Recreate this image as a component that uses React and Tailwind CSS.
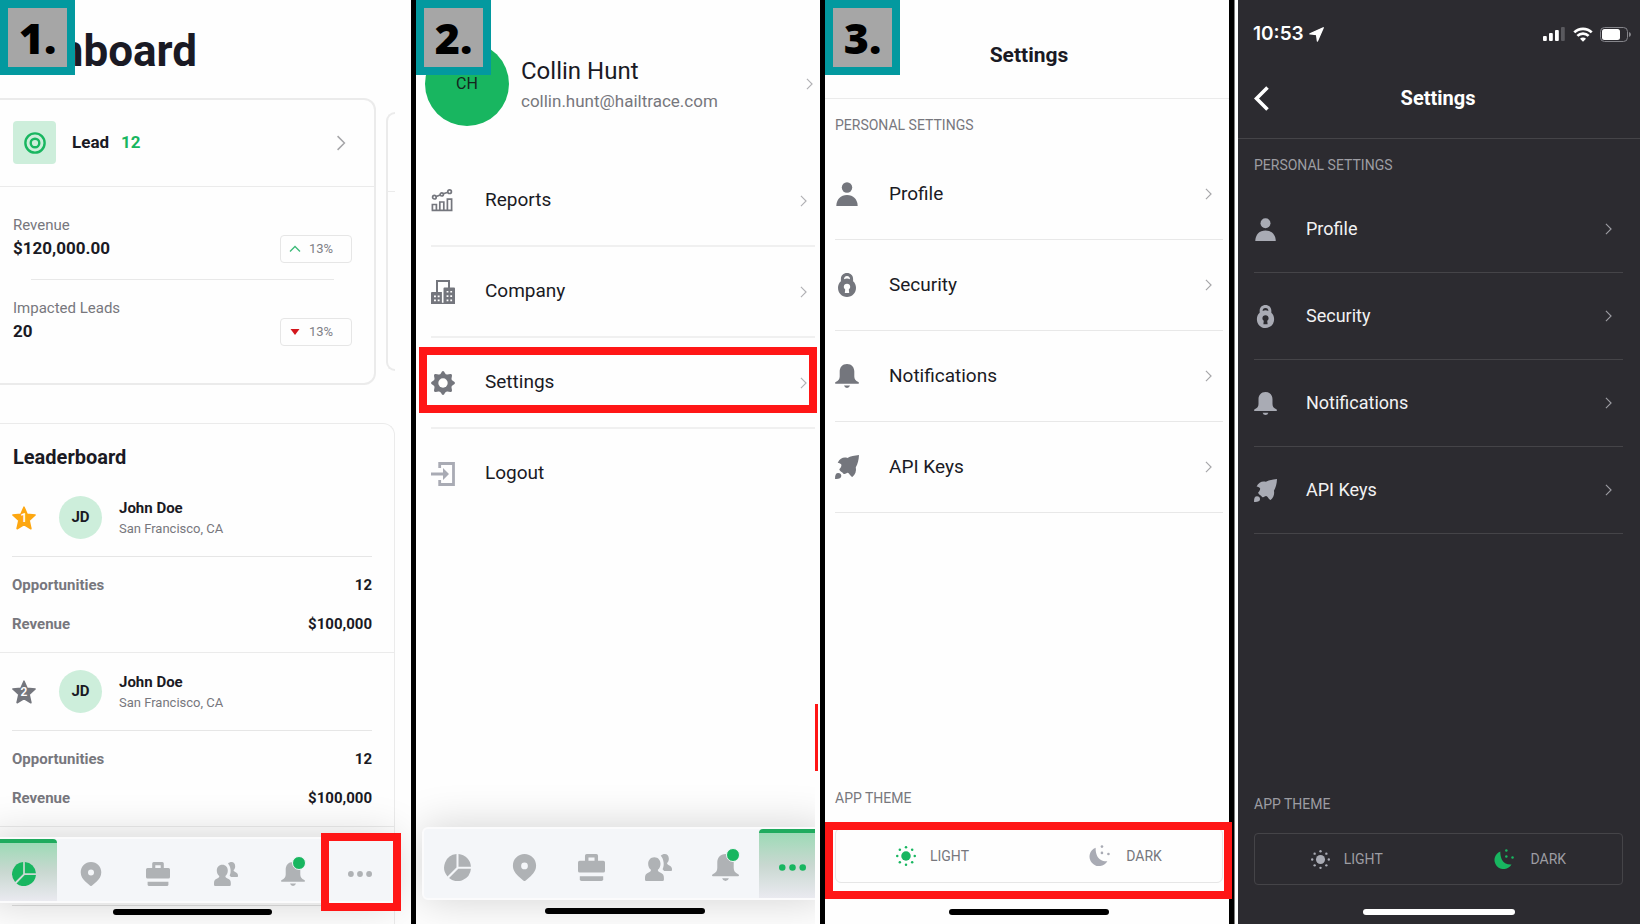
import React from "react";

/* ---------- icons ---------- */

function Icon({ className, children, ...rest }) {
  return (
    <svg viewBox="0 0 24 24" fill="currentColor" aria-hidden="true" className={`shrink-0 ${className}`} {...rest}>
      {children}
    </svg>
  );
}

const PieIcon = ({ className }) => (
  <Icon className={className}>
    <path d="M12.9.05A12 12 0 0 1 23.95 11.3H12.9Z" />
    <path d="M11.1.05V11.9L3.1 19.9A12 12 0 0 1 11.1.05Z" />
    <path d="M23.95 13.1A12 12 0 0 1 4.5 21.4L12.7 13.1Z" />
  </Icon>
);

const PinIcon = ({ className }) => (
  <Icon className={className}>
    <path
      fillRule="evenodd"
      d="M12 0C6.2 0 1.7 4.6 1.7 10.3c0 4.2 2 6.6 4.6 9.2l4.6 4.1c.7.6 1.5.6 2.2 0l4.6-4.1c2.6-2.6 4.6-5 4.6-9.2C22.3 4.6 17.8 0 12 0Zm0 7.6a3 3 0 1 1 0 6 3 3 0 0 1 0-6Z"
    />
  </Icon>
);

const BriefcaseIcon = ({ className }) => (
  <Icon className={className}>
    <path
      fillRule="evenodd"
      d="M6.2 6V1.5Q6.2 0 7.7 0h8.6q1.5 0 1.5 1.5V6H22.5q1.500 0 1.500 1.500V15q0 1.500-1.500 1.500h-21Q0 16.500 0 15V7.500Q0 6 1.500 6ZM9.300 3.200V6h5.400V3.200Z"
    />
    <path d="M1.600 19.700h20.800V22.500q0 1.500-1.500 1.500H3.100q-1.500 0-1.500-1.500Z" />
  </Icon>
);

const UsersIcon = ({ className }) => (
  <Icon className={className}>
    <path d="M8.300 2.800c3.400 0 5.500 2.600 5.500 5.800 0 2.300-.900 4.300-2.400 5.500 0 1.500.800 1.800 2.100 2.400 2.500 1.100 3.300 2.300 3.300 4.500v1.800q0 1.200-1.200 1.200H1.200Q0 24 0 22.800V21c0-2.200.800-3.400 3.200-4.500 1.300-.600 2.100-.900 2.100-2.400C3.700 12.900 2.800 10.900 2.800 8.600c0-3.200 2.100-5.800 5.500-5.800Z" />
    <path d="M14 1.500C15 .500 16.200 0 17.500 0c2.300 0 3.700 1.800 3.700 4.200 0 1.700-.600 3-1.600 3.900 0 1.200.700 1.400 1.600 1.800 2 .900 2.800 1.900 2.800 3.500v.800q0 .800-.800.800h-6.300c-.300-.600-.800-1-1.300-1.500 1-2 1.200-4 .900-6.200C16.200 4.800 15.300 3 14 1.500Z" />
  </Icon>
);

const BellIcon = ({ className }) => (
  <Icon className={className}>
    <path d="M12 0C7.300 0 4.700 3.400 4.700 7.600V12.500c0 2.700-1.300 4.300-4 5.400Q0 18.300 0 19.100q0 .700.800.700h22.400q.800 0 .800-.700 0-.800-.700-1.200c-2.700-1.100-4-2.700-4-5.400V7.600C19.300 3.400 16.700 0 12 0Z" />
    <path d="M9 21.600h6q-.700 2.400-3 2.400t-3-2.400Z" />
  </Icon>
);

const DotsIcon = ({ className }) => (
  <Icon className={className}>
    <circle cx="2.9" cy="12" r="2.9" />
    <circle cx="12" cy="12" r="2.9" />
    <circle cx="21.1" cy="12" r="2.9" />
  </Icon>
);

const ReportsIcon = ({ className }) => (
  <Icon className={className} fill="none" stroke="currentColor" strokeWidth="1.7">
    <path d="M1.400 21.300V15.500h4v5.800M8.800 21.300V13h4v8.300M16.400 21.300V10.200h4.200v11.100M.600 21.300h20.900" />
    <circle cx="3.4" cy="8.2" r="1.8" />
    <circle cx="10.8" cy="5.4" r="1.6" />
    <circle cx="18.6" cy="2.7" r="1.8" />
    <path d="M5.200 7.500l4-1.500M12.400 4.800l4.400-1.500" />
  </Icon>
);

const CompanyIcon = ({ className }) => (
  <Icon className={className}>
    <path fill="none" stroke="currentColor" strokeWidth="2" d="M6 12V1h12v7.500" />
    <path
      fillRule="evenodd"
      d="M1 12h9.900v10.700h1.600V8.500q0-1 1-1H23q1 0 1 1V24H0V13q0-1 1-1Zm2 3.600v1.700h1.900v-1.700Zm3.700 0v1.700h1.900v-1.700Zm-3.700 4v1.700h1.900v-1.700Zm3.700 0v1.700h1.900v-1.700Zm8.900-8.600v1.600h1.800V11Zm3.700 0v1.600h1.800V11Zm-3.700 4.300v1.600h1.800v-1.600Zm3.700 0v1.600h1.800v-1.600Zm-3.700 4.300v1.600h1.800v-1.600Zm3.700 0v1.600h1.800v-1.600Z"
    />
  </Icon>
);

const GEAR_QUADRANT =
  "M12 12V0Q13.100 0 13.900 1.900Q14.700 3.800 16.500 3.500L19.300 3Q21.300 2.700 21 4.700L20.500 7.500Q20.200 9.300 22.100 10.100Q24 10.900 24 12Z";

const GearIcon = ({ className }) => (
  <Icon className={className}>
    <mask id="gear-hole">
      <rect width="24" height="24" fill="#fff" />
      <circle cx="12" cy="12" r="4.7" fill="#000" />
    </mask>
    <g mask="url(#gear-hole)">
      <path d={GEAR_QUADRANT} />
      <path d={GEAR_QUADRANT} transform="rotate(90 12 12)" />
      <path d={GEAR_QUADRANT} transform="rotate(180 12 12)" />
      <path d={GEAR_QUADRANT} transform="rotate(270 12 12)" />
      <circle cx="12" cy="12" r="7" />
    </g>
  </Icon>
);

const LogoutIcon = ({ className }) => (
  <Icon className={className}>
    <path fill="none" stroke="currentColor" strokeWidth="2.8" d="M8.700 6V1.500H22.500V22.500H8.700V18" />
    <path d="M0 10.500h12V6L18 12l-6 6V13.500H0Z" />
  </Icon>
);

const PersonIcon = ({ className }) => (
  <Icon className={className}>
    <circle cx="12" cy="5.5" r="5.2" />
    <path d="M1.300 24C1.500 17.200 5.700 13 12 13s10.500 4.200 10.700 11Z" />
  </Icon>
);

const LockIcon = ({ className }) => (
  <Icon className={className}>
    <path
      fillRule="evenodd"
      d="M12 0C8.400 0 5.900 2.500 5.900 6v2.200C4 9.800 3 12.200 3 14.800 3 20 6.800 24 12 24s9-4 9-9.200c0-2.600-1-5-2.900-6.600V6c0-3.500-2.500-6-6.100-6Zm0 3c2 0 3 1.300 3 3.200-1-.500-2-.700-3-.700s-2 .200-3 .700C9 4.300 10 3 12 3Zm0 7.800c1.900 0 3.200 1.300 3.200 3 0 1.100-.500 2-1.400 2.600l.400 3.600H9.800l.400-3.600c-.900-.600-1.400-1.500-1.400-2.600 0-1.700 1.300-3 3.200-3Z"
    />
  </Icon>
);

const RocketIcon = ({ className }) => (
  <Icon className={className}>
    <path d="M24 0C19.500.400 15.500 1.200 12.400 2.900 9 1.800 5 2.800 2.700 7.800c1.700.300 3.200.900 3.700 2C6.600 11.600 5.500 13 4.300 14.200c.300 1.600 1.500 2.400 2.700 3 .900.500 1.200 1.500 1.900 1.800 1.600.500 2.600-1.300 3.700-1.200 1.600.100 2.200 3 4.700 4.200 3-2.500 4.300-6 3.500-9.800C22.700 9 23.800 5 24 0Z" />
    <path d="M.100 24C-.100 20.500.500 17.900 3.200 17.900c1.900 0 3.100 1.300 3.100 2.900C6.300 23.400 3.600 24.100.100 24Z" />
  </Icon>
);

const SunIcon = ({ className }) => (
  <Icon className={className}>
    <circle cx="12" cy="12" r="5.7" />
    <circle cx="12" cy="1.5" r="1.5" />
    <circle cx="12" cy="22.5" r="1.5" />
    <circle cx="1.5" cy="12" r="1.5" />
    <circle cx="22.5" cy="12" r="1.5" />
    <circle cx="4.6" cy="4.6" r="1.5" />
    <circle cx="19.4" cy="4.6" r="1.5" />
    <circle cx="4.6" cy="19.4" r="1.5" />
    <circle cx="19.4" cy="19.4" r="1.5" />
  </Icon>
);

const MoonIcon = ({ className }) => (
  <Icon className={className}>
    <path d="M7.600 3A10.900 10.900 0 1 0 21 18.500C15.500 18.800 11 16.500 9.200 12.200 7.800 8.800 7.500 5.800 7.600 3Z" />
    <circle cx="14.8" cy="1.8" r="1.5" />
    <circle cx="14.8" cy="9" r="1.5" />
    <circle cx="22.2" cy="10.3" r="1.5" />
  </Icon>
);

const TargetIcon = ({ className }) => (
  <Icon className={className} fill="none" stroke="currentColor" strokeWidth="2.6">
    <circle cx="12" cy="12" r="10.5" />
    <circle cx="12" cy="12" r="4.7" />
  </Icon>
);

const StarIcon = ({ className }) => (
  <Icon className={className}>
    <path
      stroke="currentColor"
      strokeWidth="1.6"
      strokeLinejoin="round"
      d="M12 1.200l3.100 7 8 .800-6 5.300 1.800 8.400L12 18.500 5.100 22.700l1.800-8.400-6-5.300 8-.800Z"
    />
  </Icon>
);

function Chevron({ className }) {
  return (
    <svg viewBox="0 0 8 14" fill="none" stroke="currentColor" aria-hidden="true" className={`shrink-0 ${className}`}>
      <path d="M1 1l6 6-6 6" strokeWidth="1.3" />
    </svg>
  );
}

/* ---------- shared parts ---------- */

function StepBadge({ children }) {
  return (
    <div className="absolute left-0 top-0 z-20 flex h-[75px] w-[75px] items-center justify-center border-8 border-[#03999f] bg-[#a6a6a6] font-['Open_Sans',sans-serif] text-[43px] font-extrabold leading-none text-black">
      {children}
    </div>
  );
}

const TABS = [
  { label: "Dashboard", icon: PieIcon },
  { label: "Map", icon: PinIcon },
  { label: "Jobs", icon: BriefcaseIcon },
  { label: "Contacts", icon: UsersIcon },
  { label: "Alerts", icon: BellIcon, dot: true },
  { label: "More", icon: DotsIcon },
];

function TabBar({ active, size, className }) {
  return (
    <nav
      className={`flex rounded-md border-2 border-[#fbfbfc] bg-[#f4f6f9] shadow-[0_0_44px_rgba(0,0,0,0.18)] ${className}`}
    >
      {TABS.map(({ label, icon: TabIcon, dot }) => {
        const on = label === active;
        return (
          <button
            key={label}
            type="button"
            aria-label={label}
            className={`flex flex-1 basis-0 items-center justify-center ${
              on
                ? "rounded-t-sm border-t-4 border-[#1fab5e] bg-linear-to-b from-[#9cdab6] via-[#c9d8d1] to-[#eaeaf0] pt-1 text-[#18b660]"
                : "pt-2 text-[#afb2b5]"
            }`}
          >
            <span className="relative">
              <TabIcon className={size} />
              {dot && (
                <span className="absolute -right-px -top-1.5 h-3.5 w-3.5 rounded-full border border-[#f4f6f9] bg-[#18b660]" />
              )}
            </span>
          </button>
        );
      })}
    </nav>
  );
}

/* ---------- panel 1 ---------- */

function Stat({ label, value, trend }) {
  return (
    <div>
      <div className="text-[15px] leading-5 text-[#77777d]">{label}</div>
      <div className="flex h-7 items-center justify-between">
        <span className="text-[17px] font-bold text-[#1a1a24]">{value}</span>
        <span className="flex h-7 w-[72px] items-center gap-2 rounded border border-[#e6e6e6] pl-2 text-[13px] text-[#808086]">
          {trend === "up" ? (
            <svg viewBox="0 0 12 8" aria-hidden="true" className="h-2 w-3">
              <path d="M1 6.500l5-5 5 5" fill="none" stroke="#3dba78" strokeWidth="1.3" />
            </svg>
          ) : (
            <svg viewBox="0 0 12 8" aria-hidden="true" className="h-2 w-3">
              <path d="M1.500 1h9L6 7Z" fill="#d3161c" />
            </svg>
          )}
          13%
        </span>
      </div>
    </div>
  );
}

function Leader({ rank, color }) {
  return (
    <li className="border-b border-[#ebebeb] pb-[18px] pl-3 pr-[22px] pt-[17px]">
      <div className="flex items-center border-b border-[#e6e6e6] pb-[17px]">
        <span className="relative flex h-6 w-6 items-center justify-center">
          <StarIcon className={`absolute inset-0 h-6 w-6 ${color}`} />
          <span className="relative text-xs font-semibold leading-none text-white">{rank}</span>
        </span>
        <span className="ml-[23px] flex h-[43px] w-[43px] items-center justify-center rounded-full bg-[#cdeedb] text-[15px] font-bold text-[#1a1a24]">
          JD
        </span>
        <div className="ml-[17px]">
          <div className="text-[15px] font-bold leading-[22px] text-[#1a1a24]">John Doe</div>
          <div className="text-[13px] leading-5 text-[#77777d]">San Francisco, CA</div>
        </div>
      </div>
      <dl className="flex flex-col gap-[19px] pt-[18px] text-[15px] font-bold leading-5">
        <div className="flex justify-between">
          <dt className="text-[#77777d]">Opportunities</dt>
          <dd className="text-[#1a1a24]">12</dd>
        </div>
        <div className="flex justify-between">
          <dt className="text-[#77777d]">Revenue</dt>
          <dd className="text-[#1a1a24]">$100,000</dd>
        </div>
      </dl>
    </li>
  );
}

function DashboardPanel() {
  return (
    <section className="relative flex h-screen flex-col overflow-hidden bg-[#fefefe]">
      <StepBadge>1.</StepBadge>
      <div className="flex min-h-0 flex-1 flex-col pr-4">
        <h1 className="-ml-4 h-[98px] shrink-0 pt-[25px] text-[44px] font-bold leading-[52px] text-[#1a1a24]">Dashboard</h1>
        <div className="flex shrink-0 gap-2.5">
          <div className="flex-1 rounded-r-xl border-y-2 border-r-2 border-[#ebebeb]">
            <div className="flex h-[87px] items-center border-b border-[#ebebeb] pb-px pl-[13px] pr-7">
              <span className="flex h-[43px] w-[43px] items-center justify-center rounded bg-[#cdeedb]">
                <TargetIcon className="h-[22px] w-[22px] text-[#18b660]" />
              </span>
              <span className="ml-4 text-[17px] font-bold text-[#1a1a24]">Lead</span>
              <span className="ml-3 flex-1 text-[17px] font-bold text-[#18b660]">12</span>
              <Chevron className="h-4 w-2.5 text-[#a5a5a8]" />
            </div>
            <div className="pb-[37px] pl-[13px] pr-[22px] pt-7">
              <Stat label="Revenue" value="$120,000.00" trend="up" />
              <hr className="mx-[18px] mb-[18px] mt-4 border-[#e8e8e8]" />
              <Stat label="Impacted Leads" value="20" trend="down" />
            </div>
          </div>
          <div className="my-3.5 w-[9px] rounded-l-xl border-y-2 border-l-2 border-[#ebebeb]">
            <div className="h-[78px] border-b border-[#ebebeb]" />
          </div>
        </div>
        <div className="mt-[38px] flex-1 rounded-tr-xl border-r border-t border-[#ebebeb] pt-[19px]">
          <h2 className="pb-2 pl-[13px] text-xl font-bold leading-7 text-[#1a1a24]">Leaderboard</h2>
          <ul>
            <Leader rank="1" color="text-[#fda711]" />
            <Leader rank="2" color="text-[#74767d]" />
          </ul>
          <div className="ml-3 mr-[22px] h-[79px] border-b border-[#e0e0e0]" />
        </div>
      </div>
      <TabBar active="Dashboard" size="h-6 w-6" className="absolute -left-3 bottom-[21px] right-[15px] h-[66px]" />
      <div className="absolute bottom-[9px] left-[113px] right-[139px] h-1.5 rounded-full bg-black" />
      <div className="pointer-events-none absolute bottom-[13px] right-2.5 h-[78px] w-20 border-8 border-[#ff1616]" />
    </section>
  );
}

/* ---------- panel 2 ---------- */

const MENU = [
  { label: "Reports", icon: ReportsIcon, tone: "text-[#74767d]" },
  { label: "Company", icon: CompanyIcon, tone: "text-[#74767d]" },
  { label: "Settings", icon: GearIcon, tone: "text-[#74767d]", highlight: true },
  { label: "Logout", icon: LogoutIcon, tone: "text-[#a9abb4]", last: true },
];

function MenuPanel() {
  return (
    <section className="relative min-h-screen bg-[#fefefe]">
      <StepBadge>2.</StepBadge>
      <div className="flex items-center pb-[30px] pl-[9px] pr-[7px] pt-[42px]">
        <span className="flex h-[84px] w-[84px] shrink-0 items-center justify-center rounded-full bg-[#18b660] text-base text-[#15251e]">
          CH
        </span>
        <div className="ml-3 flex-1 pt-0.5">
          <div className="text-2xl leading-8 text-[#1a1a24]">Collin Hunt</div>
          <div className="text-[17px] leading-7 text-[#77777d]">collin.hunt@hailtrace.com</div>
        </div>
        <Chevron className="h-3 w-[7px] text-[#b0b0b4]" />
      </div>
      <ul className="ml-[15px] mr-[5px]">
        {MENU.map(({ label, icon: RowIcon, tone, highlight, last }) => (
          <li key={label} className={`relative h-[91px] border-b-2 ${last ? "border-transparent" : "border-[#f0f0f0]"}`}>
            <button type="button" className="flex h-full w-full items-center pr-2 text-left">
              <RowIcon className={`h-6 w-6 ${tone}`} />
              <span className="ml-[30px] flex-1 text-[19px] text-[#1a1a24]">{label}</span>
              {!last && <Chevron className="h-3 w-[7px] text-[#b0b0b4]" />}
            </button>
            {highlight && (
              <div className="pointer-events-none absolute -left-3 -right-0.5 top-[9px] h-[66px] border-8 border-[#ff1616]" />
            )}
          </li>
        ))}
      </ul>
      <div className="absolute bottom-0 left-0 right-[5px] h-[170px] overflow-hidden">
        <TabBar active="More" size="h-[27px] w-[27px]" className="absolute -right-[13px] bottom-6 left-1.5 h-[73px]" />
      </div>
      <div className="absolute bottom-2.5 left-[129px] right-[115px] h-1.5 rounded-full bg-black" />
      <div className="absolute bottom-[153px] right-0.5 h-[67px] w-[3px] bg-[#ff1616]" />
    </section>
  );
}

/* ---------- panels 3 and 4 ---------- */

const SETTINGS = [
  { label: "Profile", icon: PersonIcon },
  { label: "Security", icon: LockIcon },
  { label: "Notifications", icon: BellIcon },
  { label: "API Keys", icon: RocketIcon },
];

function LightSettingsPanel() {
  return (
    <section className="relative z-10 flex min-h-screen flex-col bg-[#fefefe]">
      <StepBadge>3.</StepBadge>
      <header className="flex h-[99px] items-center justify-center border-b border-[#ebebeb] pl-2.5 pr-1.5 pt-3.5">
        <h2 className="text-[21px] font-bold text-[#1a1a24]">Settings</h2>
      </header>
      <div className="flex flex-1 flex-col pb-[9px] pl-2.5 pr-1.5 pt-4">
        <h3 className="text-sm leading-5 text-[#77777d]">PERSONAL SETTINGS</h3>
        <ul className="mt-3.5">
          {SETTINGS.map(({ label, icon: RowIcon }) => (
            <li key={label} className="h-[91px] border-b border-[#e8e8e8]">
              <button type="button" className="flex h-full w-full items-center pr-[11px] text-left">
                <RowIcon className="h-6 w-6 text-[#74767d]" />
                <span className="ml-[30px] flex-1 text-[19px] text-[#1a1a24]">{label}</span>
                <Chevron className="h-3 w-[7px] text-[#a5a5a8]" />
              </button>
            </li>
          ))}
        </ul>
        <h3 className="mt-auto text-sm leading-5 text-[#77777d]">APP THEME</h3>
        <div className="mt-5 flex h-[55px] rounded-md border border-[#e6e6e6] text-sm text-[#77777d]">
          <button type="button" aria-pressed="true" className="flex flex-1 items-center justify-center gap-3.5">
            <SunIcon className="h-5 w-5 text-[#18b660]" />
            LIGHT
          </button>
          <button type="button" aria-pressed="false" className="flex flex-1 items-center justify-center gap-4">
            <MoonIcon className="h-[21px] w-[21px] text-[#a9abb4]" />
            DARK
          </button>
        </div>
        <div className="mx-auto mt-[26px] h-1.5 w-40 rounded-full bg-black" />
      </div>
      <div className="pointer-events-none absolute -right-[3px] bottom-[25px] left-0 h-[77px] border-8 border-[#ff1616]" />
    </section>
  );
}

function StatusBar() {
  return (
    <div className="flex h-[68px] items-center text-white">
      <span className="font-[Inter,sans-serif] text-[19px] font-semibold leading-6">10:53</span>
      <svg viewBox="0 0 16 16" fill="currentColor" stroke="currentColor" strokeLinejoin="round" aria-hidden="true" className="ml-[5px] h-[15px] w-[15px]">
        <path d="M15.200.800L9 15 8 8 1 7.300Z" strokeWidth="1.4" />
      </svg>
      <svg viewBox="0 0 22 14" aria-hidden="true" className="ml-auto h-3.5 w-[22px]">
        <rect x="0" y="9" width="3.8" height="5" rx="1" fill="#fff" />
        <rect x="6" y="6" width="3.8" height="8" rx="1" fill="#fff" />
        <rect x="12" y="3" width="3.8" height="11" rx="1" fill="#fff" />
        <rect x="18" y="0" width="3.8" height="14" rx="1" fill="#59595e" />
      </svg>
      <svg viewBox="0 0 20 15" fill="none" stroke="#fff" strokeWidth="2.7" aria-hidden="true" className="ml-2 h-[15px] w-5">
        <path d="M1.300 5.400a12.300 12.300 0 0 1 17.400 0M4.400 8.900a7.900 7.900 0 0 1 11.200 0" />
        <path d="M7 11.700a4.200 4.200 0 0 1 6 0L10 14.800Z" fill="#fff" stroke="none" />
      </svg>
      <svg viewBox="0 0 31 15" aria-hidden="true" className="ml-[7px] h-[15px] w-[31px]">
        <rect x=".5" y=".5" width="27" height="14" rx="4" fill="none" stroke="#85858a" />
        <rect x="2" y="2" width="18" height="11" rx="2.5" fill="#fff" />
        <path d="M29 5v5q2-.600 2-2.500T29 5Z" fill="#85858a" />
      </svg>
    </div>
  );
}

function DarkSettingsPanel() {
  return (
    <section className="flex min-h-screen flex-col bg-[#2c2b30]">
      <header className="h-[139px] border-b border-[#454448]">
        <div className="pl-[15px] pr-[9px]">
          <StatusBar />
        </div>
        <div className="grid h-[60px] grid-cols-[1fr_auto_1fr] items-center pl-4 pr-[18px]">
          <button type="button" aria-label="Back" className="justify-self-start text-white">
            <svg viewBox="0 0 15 25" fill="none" stroke="currentColor" strokeWidth="3.6" aria-hidden="true" className="h-[25px] w-[15px]">
              <path d="M13.500 1.500L2.500 12.500l11 11" />
            </svg>
          </button>
          <h2 className="text-xl font-bold text-white">Settings</h2>
        </div>
      </header>
      <div className="flex flex-1 flex-col pb-[9px] pl-4 pr-[17px] pt-4">
        <h3 className="text-sm leading-5 text-[#9d9da3]">PERSONAL SETTINGS</h3>
        <ul className="mt-[11px]">
          {SETTINGS.map(({ label, icon: RowIcon }) => (
            <li key={label} className="h-[87px] border-b border-[#454448]">
              <button type="button" className="flex h-full w-full items-center pr-[11px] text-left">
                <RowIcon className="h-[23px] w-[23px] text-[#a9abb4]" />
                <span className="ml-[29px] flex-1 text-lg text-[#f2f2f3]">{label}</span>
                <Chevron className="h-3 w-[7px] text-[#9d9da3]" />
              </button>
            </li>
          ))}
        </ul>
        <h3 className="mt-auto text-sm leading-5 text-[#9d9da3]">APP THEME</h3>
        <div className="mt-[19px] flex h-[52px] rounded border border-[#454448] text-sm text-[#9d9da3]">
          <button type="button" aria-pressed="false" className="flex flex-1 items-center justify-center gap-3.5">
            <SunIcon className="h-[19px] w-[19px] text-[#a9abb4]" />
            LIGHT
          </button>
          <button type="button" aria-pressed="true" className="flex flex-1 items-center justify-center gap-4">
            <MoonIcon className="h-5 w-5 text-[#18b660]" />
            DARK
          </button>
        </div>
        <div className="mx-auto mt-6 h-1.5 w-[152px] rounded-full bg-white" />
      </div>
    </section>
  );
}

export default function App() {
  return (
    <main className="grid min-h-screen grid-cols-[411fr_5px_404fr_5px_404fr_6px_3px_402fr] bg-white font-[Roboto,sans-serif]">
      <DashboardPanel />
      <div className="bg-black" />
      <MenuPanel />
      <div className="bg-black" />
      <LightSettingsPanel />
      <div className="border-r border-[#808080] bg-black" />
      <div className="bg-white" />
      <DarkSettingsPanel />
    </main>
  );
}
